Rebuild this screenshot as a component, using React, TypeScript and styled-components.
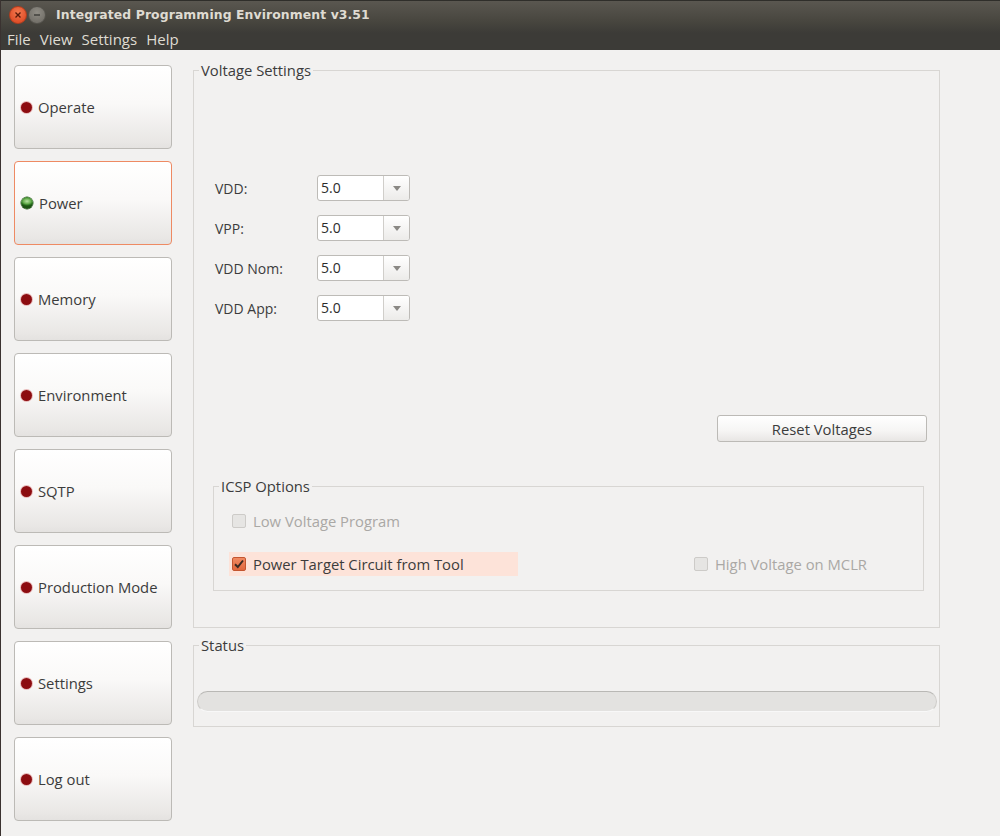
import React from "react";
import styled, { createGlobalStyle, css } from "styled-components";

const GlobalStyle = createGlobalStyle`
  html, body {
    margin: 0;
    padding: 0;
    background: #f2f1f0;
  }
  body {
    font-family: "Open Sans", "Noto Sans", "DejaVu Sans", sans-serif;
    font-size: 14px;
    color: #3c3c3c;
  }
`;

//ウィンドウ全体
const Window = styled.div`
  width: 1000px;
  height: 836px;
  display: flex;
  flex-direction: column;
  overflow: hidden;
  background: #f2f1f0;
  border-left: 1px solid #3a3230;
  box-sizing: border-box;
`;

//タイトルバー＋メニュー
const Chrome = styled.header`
  background: linear-gradient(#5a5750 0px, #48463f 20px, #3c3b37 32px, #3c3b37 100%);
  color: #dfdbd2;
  border-top: 1px solid #2f2e2a;
`;

const TitleBar = styled.div`
  height: 27px;
  display: flex;
  align-items: center;
  padding-left: 8px;
  gap: 1px;
`;

const WinButton = styled.span<{ $kind: "close" | "min" }>`
  width: 18px;
  height: 18px;
  border-radius: 50%;
  display: inline-flex;
  align-items: center;
  justify-content: center;
  box-sizing: border-box;
  ${(p) =>
    p.$kind === "close"
      ? css`
          background: radial-gradient(circle at 50% 35%, #f47a50, #e0502a 70%);
          border: 1px solid #b33d1d;
        `
      : css`
          background: radial-gradient(circle at 50% 35%, #908d85, #75726b 70%);
          border: 1px solid #55534d;
        `}
`;

const Title = styled.span`
  font-family: "DejaVu Sans", "Noto Sans", sans-serif;
  font-weight: bold;
  font-size: 12.4px;
  margin-left: 9px;
  letter-spacing: 0.1px;
`;

const MenuBar = styled.nav`
  height: 22px;
  display: flex;
  align-items: center;
  padding-left: 6px;
  gap: 9px;
  font-size: 15px;
`;

//本体
const Body = styled.div`
  flex: 1;
  display: flex;
  padding: 15px 0 0 13px;
  gap: 21px;
`;

const Nav = styled.aside`
  display: flex;
  flex-direction: column;
  gap: 12px;
  width: 158px;
`;

const NavButton = styled.button<{ $active?: boolean }>`
  height: 84px;
  display: flex;
  align-items: center;
  gap: 6px;
  padding: 0 0 0 6px;
  border: 1px solid ${(p) => (p.$active ? "#ee8a63" : "#bcbab6")};
  border-radius: 4px;
  background: linear-gradient(#ffffff 0%, #faf9f8 45%, #e9e7e5 92%, #e4e2e0 100%);
  font: inherit;
  font-size: 14.8px;
  color: #3c3c3c;
  text-align: left;
`;

const Led = styled.span<{ $on?: boolean }>`
  width: 11px;
  height: 11px;
  border-radius: 50%;
  flex: none;
  ${(p) =>
    p.$on
      ? css`
          width: 12px;
          height: 12px;
          background: radial-gradient(ellipse 60% 40% at 50% 35%, #b8e3a4 0, #66ad4e 55%, #2f7a22 80%, #1d5414 100%);
          box-shadow: 0 0 0 0.5px #2b5a22;
        `
      : css`
          background: #8c0c10;
          box-shadow: 0 0 0 1px #e8b9b9;
        `}
`;

const Main = styled.main`
  width: 747px;
  display: flex;
  flex-direction: column;
  padding-top: 5px;
  gap: 17px;
`;

//グループボックス
const Group = styled.section<{ $h: number }>`
  border: 1px solid #d8d6d3;
  height: ${(p) => p.$h}px;
  box-sizing: border-box;
  display: flex;
  flex-direction: column;
`;

const Legend = styled.div`
  align-self: flex-start;
  margin: -9px 0 0 5px;
  padding: 0 2px;
  background: #f2f1f0;
  line-height: 17px;
  font-size: 14.8px;
  color: #3c3c3c;
`;

const VoltageGrid = styled.div`
  display: grid;
  grid-template-columns: 102px 93px;
  row-gap: 14px;
  margin: 96px 0 0 21px;
  align-items: center;
`;

const FieldLabel = styled.span`
  font-size: 14px;
  color: #3c3c3c;
`;

const Combo = styled.div`
  height: 26px;
  display: flex;
  border: 1px solid #bdbbb7;
  border-radius: 3px;
  box-sizing: border-box;
  overflow: hidden;
  background: #fff;
`;

const ComboText = styled.span`
  flex: 1;
  padding-left: 3px;
  line-height: 24px;
  font-size: 14px;
  color: #2c2c2c;
`;

const ComboArrow = styled.span`
  width: 25px;
  border-left: 1px solid #d0ceca;
  background: linear-gradient(#ffffff, #ecebe9);
  display: flex;
  align-items: center;
  justify-content: center;
  &::after {
    content: "";
    border-left: 4px solid transparent;
    border-right: 4px solid transparent;
    border-top: 5px solid #8a8884;
  }
`;

const ResetRow = styled.div`
  display: flex;
  justify-content: flex-end;
  padding-right: 12px;
  margin-top: 94px;
`;

const PushButton = styled.button`
  width: 210px;
  height: 27px;
  border: 1px solid #bcbab6;
  border-radius: 3px;
  background: linear-gradient(#ffffff, #f6f5f4 60%, #e8e6e4);
  font: inherit;
  font-size: 14.8px;
  color: #3c3c3c;
`;

const InnerGroup = styled.section`
  border: 1px solid #d8d6d3;
  margin: 44px 15px 0 19px;
  height: 105px;
  box-sizing: border-box;
  display: flex;
  flex-direction: column;
`;

const CheckRow = styled.div<{ $top: number }>`
  display: flex;
  align-items: center;
  justify-content: space-between;
  margin-top: ${(p) => p.$top}px;
  padding: 0 56px 0 15px;
`;

const CheckItem = styled.label<{ $hl?: boolean; $disabled?: boolean }>`
  display: flex;
  align-items: center;
  gap: 7px;
  height: 24px;
  padding: 0 ${(p) => (p.$hl ? "54px" : "0")} 0 3px;
  background: ${(p) => (p.$hl ? "#fde3d9" : "transparent")};
  color: ${(p) => (p.$disabled ? "#aaa8a5" : "#3c3c3c")};
  font-size: 14.8px;
`;

const Box = styled.span<{ $checked?: boolean }>`
  width: 14px;
  height: 14px;
  box-sizing: border-box;
  border-radius: 2px;
  display: inline-flex;
  align-items: center;
  justify-content: center;
  ${(p) =>
    p.$checked
      ? css`
          background: linear-gradient(#f08a62, #e0673d);
          border: 1px solid #c4552f;
        `
      : css`
          background: #e6e5e3;
          border: 1px solid #cdcbc8;
        `}
`;

const ProgressBar = styled.div`
  height: 21px;
  margin: auto 2px 14px 3px;
  border-radius: 11px;
  background: #e3e2e0;
  border-top: 1px solid #b9b8b5;
  border-left: 1px solid #cfcdca;
  border-right: 1px solid #cfcdca;
  border-bottom: 1px solid #f8f8f8;
  box-sizing: border-box;
`;

const navItems = [
  "Operate",
  "Power",
  "Memory",
  "Environment",
  "SQTP",
  "Production Mode",
  "Settings",
  "Log out",
];

const voltages = ["VDD:", "VPP:", "VDD Nom:", "VDD App:"];

const Check = () => (
  <svg width="12" height="12" viewBox="0 0 12 12">
    <path d="M2 6.2 L4.8 9 L10 2.5" fill="none" stroke="#3a2a22" strokeWidth="2" />
  </svg>
);

export default function App() {
  return (
    <>
      <GlobalStyle />
      <Window>
        <Chrome>
          <TitleBar>
            <WinButton $kind="close">
              <svg width="8" height="8" viewBox="0 0 8 8">
                <path d="M1.5 1.5 L6.5 6.5 M6.5 1.5 L1.5 6.5" stroke="#5a1a0a" strokeWidth="1.4" />
              </svg>
            </WinButton>
            <WinButton $kind="min">
              <svg width="8" height="8" viewBox="0 0 8 8">
                <path d="M1 4 H7" stroke="#3c3b37" strokeWidth="1.4" />
              </svg>
            </WinButton>
            <Title>Integrated Programming Environment v3.51</Title>
          </TitleBar>
          <MenuBar>
            <span>File</span>
            <span>View</span>
            <span>Settings</span>
            <span>Help</span>
          </MenuBar>
        </Chrome>
        <Body>
          <Nav>
            {navItems.map((n) => (
              <NavButton key={n} $active={n === "Power"}>
                <Led $on={n === "Power"} />
                {n}
              </NavButton>
            ))}
          </Nav>
          <Main>
            <Group $h={558}>
              <Legend>Voltage Settings</Legend>
              <VoltageGrid>
                {voltages.map((v) => (
                  <React.Fragment key={v}>
                    <FieldLabel>{v}</FieldLabel>
                    <Combo>
                      <ComboText>5.0</ComboText>
                      <ComboArrow />
                    </Combo>
                  </React.Fragment>
                ))}
              </VoltageGrid>
              <ResetRow>
                <PushButton>Reset Voltages</PushButton>
              </ResetRow>
              <InnerGroup>
                <Legend>ICSP Options</Legend>
                <CheckRow $top={14}>
                  <CheckItem $disabled>
                    <Box />
                    Low Voltage Program
                  </CheckItem>
                </CheckRow>
                <CheckRow $top={19}>
                  <CheckItem $hl>
                    <Box $checked>
                      <Check />
                    </Box>
                    Power Target Circuit from Tool
                  </CheckItem>
                  <CheckItem $disabled>
                    <Box />
                    High Voltage on MCLR
                  </CheckItem>
                </CheckRow>
              </InnerGroup>
            </Group>
            <Group $h={82}>
              <Legend>Status</Legend>
              <ProgressBar />
            </Group>
          </Main>
        </Body>
      </Window>
    </>
  );
}
